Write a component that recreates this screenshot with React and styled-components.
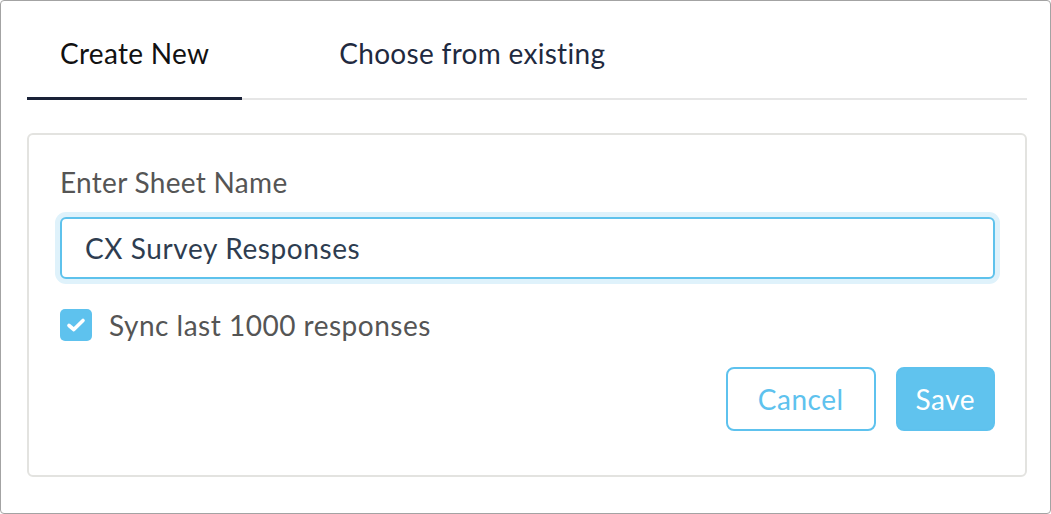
import React, { useState } from "react";
import styled, { createGlobalStyle } from "styled-components";

const GlobalStyle = createGlobalStyle`
  html, body {
    margin: 0;
    padding: 0;
    background: #ffffff;
  }
  body {
    font-family: "Lato", "Noto Sans", sans-serif;
  }
`;

const Frame = styled.div`
  box-sizing: border-box;
  width: 1051px;
  height: 514px;
  border: 1px solid #a3a3a3;
  border-radius: 4px;
  padding: 0 23px 0 26px;
  background: #ffffff;
`;

const TabBar = styled.div`
  display: flex;
  height: 99px;
  border-bottom: 2px solid #e6e6e6;
  box-sizing: border-box;
`;

const Tab = styled.button`
  all: unset;
  display: flex;
  align-items: center;
  box-sizing: border-box;
  height: 99px;
  margin-bottom: -2px;
  padding: 8px ${(p) => (p.$active ? "33px" : "0")} 0;
  margin-left: ${(p) => (p.$active ? "0" : "97px")};
  border-bottom: 3px solid ${(p) => (p.$active ? "#1a2238" : "transparent")};
  font-size: 28px;
  letter-spacing: 0.3px;
  color: ${(p) => (p.$active ? "#111111" : "#1f2a40")};
  cursor: pointer;
`;

const Card = styled.div`
  box-sizing: border-box;
  margin-top: 33px;
  height: 344px;
  border: 2px solid #e3e3e0;
  border-radius: 6px;
  padding: 31px 30px 0 31px;
`;

const Label = styled.label`
  display: block;
  font-size: 28px;
  letter-spacing: 0.3px;
  color: #555555;
  line-height: 32px;
`;

const Input = styled.input`
  box-sizing: border-box;
  display: block;
  width: 100%;
  height: 62px;
  margin-top: 19px;
  padding: 0 23px;
  border: 2px solid #5ec2ec;
  border-radius: 6px;
  box-shadow: 0 0 0 5px #dff2fb;
  font-family: inherit;
  font-size: 28px;
  letter-spacing: 0.6px;
  color: #2e3d50;
  outline: none;
`;

const CheckRow = styled.label`
  display: flex;
  align-items: center;
  gap: 17px;
  margin-top: 30px;
  height: 32px;
  line-height: 32px;
  font-size: 28px;
  letter-spacing: 0.5px;
  color: #555555;
  cursor: pointer;
`;

const Box = styled.span`
  display: flex;
  align-items: center;
  justify-content: center;
  width: 32px;
  height: 32px;
  border-radius: 5px;
  background: ${(p) => (p.$checked ? "#5ec2ee" : "#ffffff")};
  border: ${(p) => (p.$checked ? "none" : "2px solid #c9c9c9")};
  box-sizing: border-box;
`;

const Actions = styled.div`
  display: flex;
  justify-content: flex-end;
  gap: 20px;
  margin-top: 26px;
`;

const Button = styled.button`
  box-sizing: border-box;
  height: 64px;
  padding: 0 ${(p) => (p.$primary ? "18px" : "30px")};
  border-radius: 8px;
  border: 2px solid #5ec2ee;
  background: ${(p) => (p.$primary ? "#60c3ee" : "#ffffff")};
  color: ${(p) => (p.$primary ? "#ffffff" : "#5ec2ee")};
  font-family: inherit;
  font-size: 28px;
  letter-spacing: 0.5px;
  cursor: pointer;
`;

export default function App() {
  const [tab, setTab] = useState(0);
  const [checked, setChecked] = useState(true);
  const [name, setName] = useState("CX Survey Responses");

  return (
    <>
      <GlobalStyle />
      <Frame>
        <TabBar>
          <Tab $active={tab === 0} onClick={() => setTab(0)}>
            Create New
          </Tab>
          <Tab $active={tab === 1} onClick={() => setTab(1)}>
            Choose from existing
          </Tab>
        </TabBar>
        <Card>
          <Label htmlFor="sheet">Enter Sheet Name</Label>
          <Input id="sheet" value={name} onChange={(e) => setName(e.target.value)} />
          <CheckRow onClick={() => setChecked(!checked)}>
            <Box $checked={checked}>
              {checked && (
                <svg width="20" height="16" viewBox="0 0 20 16">
                  <path d="M3 8.5 L7.8 12.5 L17 3.5" fill="none" stroke="#ffffff" strokeWidth="3.6" strokeLinecap="round" strokeLinejoin="round" />
                </svg>
              )}
            </Box>
            Sync last 1000 responses
          </CheckRow>
          <Actions>
            <Button>Cancel</Button>
            <Button $primary>Save</Button>
          </Actions>
        </Card>
      </Frame>
    </>
  );
}
